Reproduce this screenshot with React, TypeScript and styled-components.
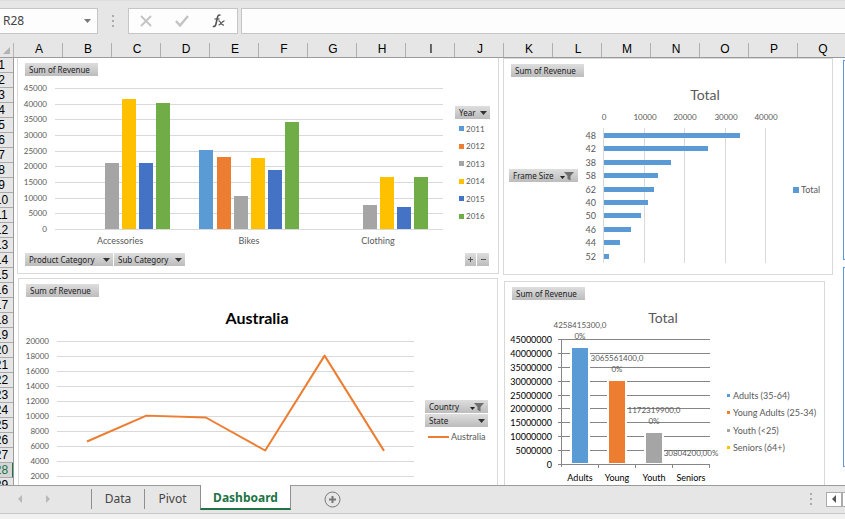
import React from "react";
import styled, { createGlobalStyle } from "styled-components";

const GlobalStyle = createGlobalStyle`
  *, *::before, *::after { box-sizing: border-box; }
  body { margin: 0; background: #e6e6e6; }
  button, input { font: inherit; color: inherit; margin: 0; padding: 0; border-radius: 0; }
  ol, ul { list-style: none; margin: 0; padding: 0; }
`;

const uiFont = `"Noto Sans", "Open Sans", sans-serif`;
const chartFont = `Lato, "Open Sans", sans-serif`;
const headingFont = `"Liberation Sans", Arial, sans-serif`;

const palette = {
  sky: "#5b9bd5",
  orange: "#ed7d31",
  gray: "#a5a5a5",
  gold: "#ffc000",
  blue: "#4472c4",
  green: "#70ad47",
  grid: "#d9d9d9",
  text: "#595959",
  excel: "#217346",
};

/* ---------- window frame ---------- */

const Window = styled.div`
  display: flex;
  flex-direction: column;
  height: 100vh;
  overflow: hidden;
  background: #e6e6e6;
  font-family: ${uiFont};
  font-size: 12px;
  color: #444;
`;

const FormulaBar = styled.header`
  display: flex;
  flex: none;
  align-items: center;
  height: 43px;
  padding: 7px 0 10px;
  border-top: 1px solid #dedede;
`;

const NameBox = styled.div`
  display: flex;
  align-items: center;
  width: 98px;
  height: 26px;
  padding: 0 6px 0 3px;
  background: #fdfdfd;
  border: 1px solid #c6c6c6;
  border-left: 0;
`;

const NameInput = styled.input`
  flex: 1;
  min-width: 0;
  border: 0;
  background: none;
  outline: none;
`;

const BareButton = styled.button`
  display: flex;
  align-items: center;
  justify-content: center;
  border: 0;
  background: none;
`;

const Grip = styled.span`
  display: flex;
  flex-direction: column;
  align-items: center;
  gap: 3px;
  width: 30px;
  &::before, &::after, & > i {
    content: "";
    width: 2px;
    height: 2px;
    background: #ababab;
  }
`;

const FormulaTools = styled.div`
  display: flex;
  align-items: center;
  justify-content: space-around;
  width: 110px;
  height: 26px;
  background: #fdfdfd;
  border: 1px solid #c6c6c6;
`;

const FormulaInput = styled.input`
  flex: 1;
  min-width: 0;
  height: 26px;
  margin-left: 3px;
  padding: 0 6px;
  background: #fdfdfd;
  border: 1px solid #c6c6c6;
  border-right: 0;
  outline: none;
`;

const ColumnHeads = styled.div`
  display: flex;
  flex: none;
  height: 15px;
  border-bottom: 1px solid #9b9b9b;
  font-family: ${headingFont};
  color: #000;
`;

const Corner = styled.div`
  display: flex;
  flex: none;
  align-items: flex-end;
  justify-content: flex-end;
  width: 14px;
  padding: 0 3px 3px 0;
  border-right: 1px solid #b5b5b5;
`;

const ColumnHead = styled.div`
  flex: none;
  width: 49px;
  padding-left: 2px;
  line-height: 13px;
  text-align: center;
  border-right: 1px solid #b0b0b0;
`;

const SheetArea = styled.main`
  display: flex;
  flex: 1;
  min-height: 0;
  overflow: hidden;
  background: #fff;
`;

const RowHeads = styled.ol`
  display: flex;
  flex: none;
  flex-direction: column;
  align-items: center;
  width: 14px;
  height: 100%;
  overflow: hidden;
  background: #e6e6e6;
  border-right: 1px solid #9b9b9b;
  font-family: ${headingFont};
  color: #000;
`;

const RowHead = styled.li<{ $active: boolean }>`
  display: flex;
  flex: none;
  justify-content: center;
  width: 14px;
  height: 15px;
  padding-right: ${(p) => (p.$active ? "8px" : "10px")};
  line-height: 15px;
  border-bottom: 1px solid #ababab;
  border-right: ${(p) => (p.$active ? `2px solid ${palette.excel}` : "0")};
  background: ${(p) => (p.$active ? "#d6d6d6" : "none")};
  color: ${(p) => (p.$active ? palette.excel : "inherit")};
`;

/* ---------- chart panels ---------- */

const Canvas = styled.div`
  display: flex;
  flex: 1;
  min-width: 0;
  overflow: hidden;
  font-family: ${chartFont};
  font-size: 9px;
  color: ${palette.text};
`;

const WideColumn = styled.div`
  display: flex;
  flex: 1 0 482px;
  flex-direction: column;
  gap: 4px;
  margin-left: 3px;
`;

const NarrowColumn = styled.div`
  display: flex;
  flex: 1 0 330px;
  flex-direction: column;
  gap: 6px;
  margin: 0 10px 0 4px;
`;

const SlicerColumn = styled.div`
  display: flex;
  flex: 0 0 120px;
  flex-direction: column;
  gap: 7px;
  padding-top: 2px;
`;

const Slicer = styled.div`
  height: 200px;
  border: 1px solid ${palette.sky};
`;

const Panel = styled.section<{ $joined?: boolean; $inset?: string }>`
  flex: none;
  margin: ${(p) => p.$inset ?? "0"};
  padding: 5px 0 7px;
  border: 1px solid ${palette.grid};
  border-top-width: ${(p) => (p.$joined ? "0" : "1px")};
`;

const PanelBar = styled.div`
  display: flex;
  gap: 1px;
  padding: 0 9px 0 7px;
`;

const PanelBody = styled.div<{ $height: number }>`
  display: flex;
  justify-content: space-between;
  height: ${(p) => p.$height}px;
`;

const Side = styled.aside<{ $top: number; $width: number; $edge?: number }>`
  display: flex;
  flex: none;
  flex-direction: column;
  gap: 1px;
  width: ${(p) => p.$width}px;
  margin-top: ${(p) => p.$top}px;
  margin-left: ${(p) => p.$edge ?? 0}px;
`;

const FieldButton = styled.button<{ $width?: number }>`
  display: flex;
  flex: none;
  align-items: center;
  justify-content: space-between;
  width: ${(p) => (p.$width ? `${p.$width}px` : "auto")};
  height: 13px;
  padding: 0 3px 0 4px;
  border: 0;
  background: linear-gradient(#dedede, #bcbcbc);
  font-family: ${uiFont};
  font-size: 8px;
  line-height: 13px;
  color: #222;
  white-space: nowrap;
`;

const StepButton = styled(FieldButton)`
  justify-content: center;
  padding: 0;
`;

const Spacer = styled.span`
  flex: 1;
`;

const Legend = styled.ul<{ $height?: number; $small?: boolean }>`
  display: flex;
  flex-direction: column;
  justify-content: space-between;
  height: ${(p) => (p.$height ? `${p.$height}px` : "auto")};
  font-size: ${(p) => (p.$small ? "8px" : "9px")};
`;

const LegendItem = styled.li<{ $pad?: number; $gap?: number }>`
  display: flex;
  align-items: center;
  gap: ${(p) => p.$gap ?? 2}px;
  height: 17px;
  padding-left: ${(p) => p.$pad ?? 0}px;
  white-space: nowrap;
`;

const Swatch = styled.span<{ $color: string; $size: number }>`
  flex: none;
  width: ${(p) => p.$size}px;
  height: ${(p) => p.$size}px;
  background: ${(p) => p.$color};
`;

const LineKey = styled.span`
  flex: none;
  width: 21px;
  height: 2px;
  background: ${palette.orange};
`;

const Plot = styled.svg`
  display: block;
  flex: none;
  overflow: visible;
  text { fill: ${palette.text}; }
  text.dark { fill: #000; }
  text.small { font-size: 8px; }
  text.title { font-size: 14px; }
  text.strong { font-size: 16px; font-weight: 700; fill: #000; }
`;

/* ---------- sheet tabs ---------- */

const TabStrip = styled.footer`
  display: flex;
  flex: none;
  height: 28px;
  background: #e6e6e6;
  border-top: 1px solid #9b9b9b;
`;

const NavButtons = styled.div`
  display: flex;
  align-items: center;
  gap: 22px;
  width: 91px;
  padding-left: 17px;
  padding-bottom: 2px;
`;

const Tabs = styled.nav`
  display: flex;
  align-items: flex-start;
`;

const Tab = styled.button<{ $width: number }>`
  width: ${(p) => p.$width}px;
  height: 20px;
  margin-top: 3px;
  border: 0;
  border-left: 1px solid #8f8f8f;
  background: none;
  line-height: 18px;
`;

const ActiveTab = styled(Tab)`
  height: 25px;
  margin-top: -1px;
  padding-top: 3px;
  border-right: 1px solid #8f8f8f;
  border-bottom: 2px solid ${palette.excel};
  background: #fff;
  color: ${palette.excel};
  font-weight: 700;
`;

const AddSheet = styled(BareButton)`
  width: 82px;
  padding-bottom: 1px;
`;

const ScrollControls = styled.div`
  display: flex;
  align-items: center;
  margin-left: auto;
  padding-bottom: 1px;
`;

const ScrollButton = styled(BareButton)<{ $width: number }>`
  width: ${(p) => p.$width}px;
  height: 15px;
  border: 1px solid #ababab;
  border-right-width: ${(p) => (p.$width < 10 ? "0" : "1px")};
  background: #fff;
`;

const StatusEdge = styled.div`
  flex: none;
  height: 6px;
  border-top: 1px solid #c6c6c6;
  background: #f3f1f0;
`;

/* ---------- small drawings ---------- */

const DownArrow = ({ color = "#333" }: { color?: string }) => (
  <svg width="7" height="4" viewBox="0 0 7 4" aria-hidden="true">
    <path d="M0 0h7L3.5 4z" fill={color} />
  </svg>
);

const FilterArrow = () => (
  <svg width="15" height="10" viewBox="0 0 15 10" aria-hidden="true">
    <path d="M0 5h5L2.500 8z" fill="#222" />
    <path d="M4 1h10L10.500 5v4.500L7.500 8V5z" fill="#6f6f6f" />
  </svg>
);

const SideArrow = ({ left, color, size = 8 }: { left?: boolean; color: string; size?: number }) => (
  <svg width={size - 2} height={size} viewBox="0 0 6 8" aria-hidden="true">
    <path d={left ? "M5 0v8L1 4z" : "M1 0v8l4-4z"} fill={color} />
  </svg>
);

/* ---------- charts ---------- */

type Bar = { slot: number; value: number; color: string };

const years = [
  { label: "2011", color: palette.sky },
  { label: "2012", color: palette.orange },
  { label: "2013", color: palette.gray },
  { label: "2014", color: palette.gold },
  { label: "2015", color: palette.blue },
  { label: "2016", color: palette.green },
];

const categories: { label: string; values: number[] }[] = [
  { label: "Accessories", values: [0, 0, 21000, 41500, 21000, 40300] },
  { label: "Bikes", values: [25300, 23100, 10600, 22700, 18900, 34200] },
  { label: "Clothing", values: [0, 0, 7700, 16700, 7100, 16700] },
];

function CategoryChart() {
  const y = (v: number) => Math.round(153 - (v * 141) / 45000);
  const ticks = Array.from({ length: 10 }, (_, i) => i * 5000);
  return (
    <Plot width="426" height="177" role="img" aria-label="Revenue by category and year">
      {ticks.map((t) => (
        <g key={t}>
          <rect x="37" y={y(t)} width="388" height="1" fill={palette.grid} />
          <text className="small" x="29" y={y(t) + 3} textAnchor="end">{t}</text>
        </g>
      ))}
      {categories.map((c, ci) => {
        const bars: Bar[] = c.values.map((value, slot) => ({ slot, value, color: years[slot].color }));
        return (
          <g key={c.label}>
            {bars.filter((b) => b.value > 0).map((b) => (
              <rect
                key={b.slot}
                x={Math.round(52.4 + ci * 129 + b.slot * 17.2)}
                y={y(b.value)}
                width="14"
                height={153 - y(b.value)}
                fill={b.color}
              />
            ))}
            <text x={102 + ci * 129} y="168" textAnchor="middle">{c.label}</text>
          </g>
        );
      })}
    </Plot>
  );
}

function CountryChart() {
  const y = (v: number) => 194 - (v * 15) / 2000;
  const ticks = Array.from({ length: 11 }, (_, i) => i * 2000);
  const values = [6600, 10050, 9800, 5400, 18050, 5350];
  const points = values.map((v, i) => `${68 + i * 59.4},${y(v)}`).join(" ");
  return (
    <Plot width="396" height="200" role="img" aria-label="Australia revenue">
      <text className="strong" x="238" y="27" textAnchor="middle">Australia</text>
      {ticks.map((t) => (
        <g key={t}>
          <rect x="38" y={y(t)} width="357" height="1" fill={palette.grid} />
          <text className="small" x="30" y={y(t) + 3} textAnchor="end">{t}</text>
        </g>
      ))}
      <polyline points={points} fill="none" stroke={palette.orange} strokeWidth="2" strokeLinejoin="round" />
    </Plot>
  );
}

const frames: [string, number][] = [
  ["48", 33800], ["42", 25900], ["38", 16700], ["58", 13700], ["62", 12500],
  ["40", 11000], ["50", 9500], ["46", 6800], ["44", 4300], ["52", 1600],
];

function FrameChart() {
  const x = (v: number) => Math.round(23 + (v * 40.5) / 10000);
  const ticks = [0, 10000, 20000, 30000, 40000];
  return (
    <Plot width="213" height="190" role="img" aria-label="Revenue by frame size">
      <text className="title" x="125" y="23" textAnchor="middle">Total</text>
      {ticks.map((t) => (
        <g key={t}>
          <rect x={x(t)} y="51" width="1" height="135" fill={palette.grid} />
          <text className="small" x={x(t) + 1} y="43" textAnchor="middle">{t}</text>
        </g>
      ))}
      {frames.map(([label, value], i) => {
        const top = Math.round(56 + i * 13.4);
        return (
          <g key={label}>
            <rect x="24" y={top} width={x(value) - 24} height="5" fill={palette.sky} />
            <text x="16" y={top + 6} textAnchor="end">{label}</text>
          </g>
        );
      })}
    </Plot>
  );
}

const ages = [
  { label: "Adults", legend: "Adults (35-64)", value: 42584153, color: palette.sky, tag: ["4258415300,0", "0%"], tagY: 28 },
  { label: "Young", legend: "Young Adults (25-34)", value: 30655614, color: palette.orange, tag: ["3065561400,0", "0%"], tagY: 61 },
  { label: "Youth", legend: "Youth (<25)", value: 11723199, color: palette.gray, tag: ["1172319900,0", "0%"], tagY: 113 },
  { label: "Seniors", legend: "Seniors (64+)", value: 308042, color: palette.gold, tag: ["30804200,00%"], tagY: 156 },
];

function AgeChart() {
  const y = (v: number) => Math.round(164 - (v * 125) / 45000000);
  const ticks = Array.from({ length: 10 }, (_, i) => i * 5000000);
  return (
    <Plot width="218" height="190" role="img" aria-label="Revenue by age group">
      <text className="title" x="158" y="23" textAnchor="middle">Total</text>
      <rect x="56" y="39" width="1" height="128" fill="#868686" />
      {ticks.map((t) => (
        <g key={t}>
          <rect x="53" y={y(t)} width="152" height="1" fill="#868686" />
          <text className="dark" x="47" y={y(t) + 4} textAnchor="end">{t}</text>
        </g>
      ))}
      {ages.map((a, i) => {
        const center = 75 + i * 37;
        return (
          <g key={a.label}>
            <rect x={center + 18} y="164" width="1" height="4" fill="#868686" />
            {a.value > 1000000 && (
              <>
                <rect x={center - 10} y={y(a.value) + 1} width="20" height={163 - y(a.value)} fill="#fff" />
                <rect x={center - 8} y={y(a.value) + 2} width="16" height={161 - y(a.value)} fill={a.color} />
              </>
            )}
            {a.tag.map((line, n) => (
              <text className="small" key={line} x={center} y={a.tagY + n * 11} textAnchor="middle">{line}</text>
            ))}
            <text className="dark" x={center} y="181" textAnchor="middle">{a.label}</text>
          </g>
        );
      })}
    </Plot>
  );
}

/* ---------- page ---------- */

const columns = "ABCDEFGHIJKLMNOPQ".split("");
const rows = Array.from({ length: 30 }, (_, i) => i + 1);

export default function App() {
  return (
    <Window>
      <GlobalStyle />
      <FormulaBar>
        <NameBox>
          <NameInput aria-label="Name box" defaultValue="R28" />
          <BareButton aria-label="Show names"><DownArrow color="#777" /></BareButton>
        </NameBox>
        <Grip><i /></Grip>
        <FormulaTools>
          <BareButton aria-label="Cancel">
            <svg width="12" height="12" viewBox="0 0 12 12"><path d="M1 1l10 10M11 1L1 11" stroke="#c3c3c3" strokeWidth="1.800" /></svg>
          </BareButton>
          <BareButton aria-label="Enter">
            <svg width="14" height="12" viewBox="0 0 14 12"><path d="M1 6l4 4.500L13 1" fill="none" stroke="#c3c3c3" strokeWidth="2.400" /></svg>
          </BareButton>
          <BareButton aria-label="Insert function">
            <svg width="14" height="14" viewBox="0 0 14 14" fill="none" stroke="#555">
              <path d="M8.500 1.500C7 .3 6 1.200 5.600 3L3.800 10.500C3.400 12.200 2.200 13 .8 12.200" strokeWidth="1.600" />
              <path d="M2.500 5h5" strokeWidth="1.200" />
              <path d="M6.500 7c2-.8 2.500 4.800 5.500 4M12.500 6.800C10.500 6.500 9 11 6.500 11" strokeWidth="1.200" />
            </svg>
          </BareButton>
        </FormulaTools>
        <FormulaInput aria-label="Formula" />
      </FormulaBar>

      <ColumnHeads>
        <Corner>
          <svg width="7" height="7" viewBox="0 0 7 7" aria-hidden="true"><path d="M7 0v7H0z" fill="#b3b3b3" /></svg>
        </Corner>
        {columns.map((c) => <ColumnHead key={c}>{c}</ColumnHead>)}
      </ColumnHeads>

      <SheetArea>
        <RowHeads>
          {rows.map((r) => <RowHead key={r} $active={r === 28}>{r}</RowHead>)}
        </RowHeads>
        <Canvas>
          <WideColumn>
            <Panel $joined>
              <PanelBar><FieldButton $width={73}>Sum of Revenue</FieldButton></PanelBar>
              <PanelBody $height={177}>
                <CategoryChart />
                <Side $top={30} $width={43}>
                  <FieldButton $width={35}>Year<DownArrow /></FieldButton>
                  <Legend $height={105} $small>
                    {years.map((y) => (
                      <LegendItem key={y.label} $pad={4}><Swatch $color={y.color} $size={5} />{y.label}</LegendItem>
                    ))}
                  </Legend>
                </Side>
              </PanelBody>
              <PanelBar>
                <FieldButton $width={88}>Product Category<DownArrow /></FieldButton>
                <FieldButton $width={71}>Sub Category<DownArrow /></FieldButton>
                <Spacer />
                <StepButton $width={11} aria-label="Expand field">
                  <svg width="5" height="5"><path d="M0 2h5v1H0zM2 0h1v5H2z" fill="#555" /></svg>
                </StepButton>
                <StepButton $width={12} aria-label="Collapse field">
                  <svg width="5" height="5"><path d="M0 2h5v1H0z" fill="#555" /></svg>
                </StepButton>
              </PanelBar>
            </Panel>
            <Panel $inset="0 1px">
              <PanelBar><FieldButton $width={73}>Sum of Revenue</FieldButton></PanelBar>
              <PanelBody $height={200}>
                <CountryChart />
                <Side $top={103} $width={72}>
                  <FieldButton $width={63}>Country<FilterArrow /></FieldButton>
                  <FieldButton $width={63}>State<DownArrow /></FieldButton>
                  <LegendItem as="div" $pad={3}><LineKey />Australia</LegendItem>
                </Side>
              </PanelBody>
            </Panel>
          </WideColumn>

          <NarrowColumn>
            <Panel>
              <PanelBar><FieldButton $width={73}>Sum of Revenue</FieldButton></PanelBar>
              <PanelBody $height={190}>
                <Side $top={92} $width={71} $edge={5}>
                  <FieldButton $width={69}>Frame Size<FilterArrow /></FieldButton>
                </Side>
                <FrameChart />
                <Side $top={104} $width={39}>
                  <LegendItem as="div"><Swatch $color={palette.sky} $size={6} />Total</LegendItem>
                </Side>
              </PanelBody>
            </Panel>
            <Panel $inset="0 8px 0 1px">
              <PanelBar><FieldButton $width={73}>Sum of Revenue</FieldButton></PanelBar>
              <PanelBody $height={190}>
                <AgeChart />
                <Side $top={87} $width={97}>
                  <Legend $height={69}>
                    {ages.map((a) => (
                      <LegendItem key={a.label} $gap={3}><Swatch $color={a.color} $size={3} />{a.legend}</LegendItem>
                    ))}
                  </Legend>
                </Side>
              </PanelBody>
            </Panel>
          </NarrowColumn>

          <SlicerColumn>
            <Slicer />
            <Slicer />
          </SlicerColumn>
        </Canvas>
      </SheetArea>

      <TabStrip>
        <NavButtons>
          <BareButton aria-label="Previous sheet"><SideArrow left color="#b8b8b8" /></BareButton>
          <BareButton aria-label="Next sheet"><SideArrow color="#b8b8b8" /></BareButton>
        </NavButtons>
        <Tabs aria-label="Sheets">
          <Tab $width={53}>Data</Tab>
          <Tab $width={56}>Pivot</Tab>
          <ActiveTab $width={91} aria-current="page">Dashboard</ActiveTab>
        </Tabs>
        <AddSheet aria-label="New sheet">
          <svg width="17" height="17" viewBox="0 0 17 17">
            <circle cx="8.500" cy="8.500" r="7.500" fill="none" stroke="#777" />
            <path d="M7.500 5h2v2.500H12v2H9.500V12h-2V9.500H5v-2h2.500z" fill="#777" />
          </svg>
        </AddSheet>
        <ScrollControls>
          <Grip><i /></Grip>
          <ScrollButton $width={16} aria-label="Scroll left"><SideArrow left color="#555" /></ScrollButton>
          <ScrollButton $width={3} aria-label="Scroll bar" />
        </ScrollControls>
      </TabStrip>
      <StatusEdge />
    </Window>
  );
}
